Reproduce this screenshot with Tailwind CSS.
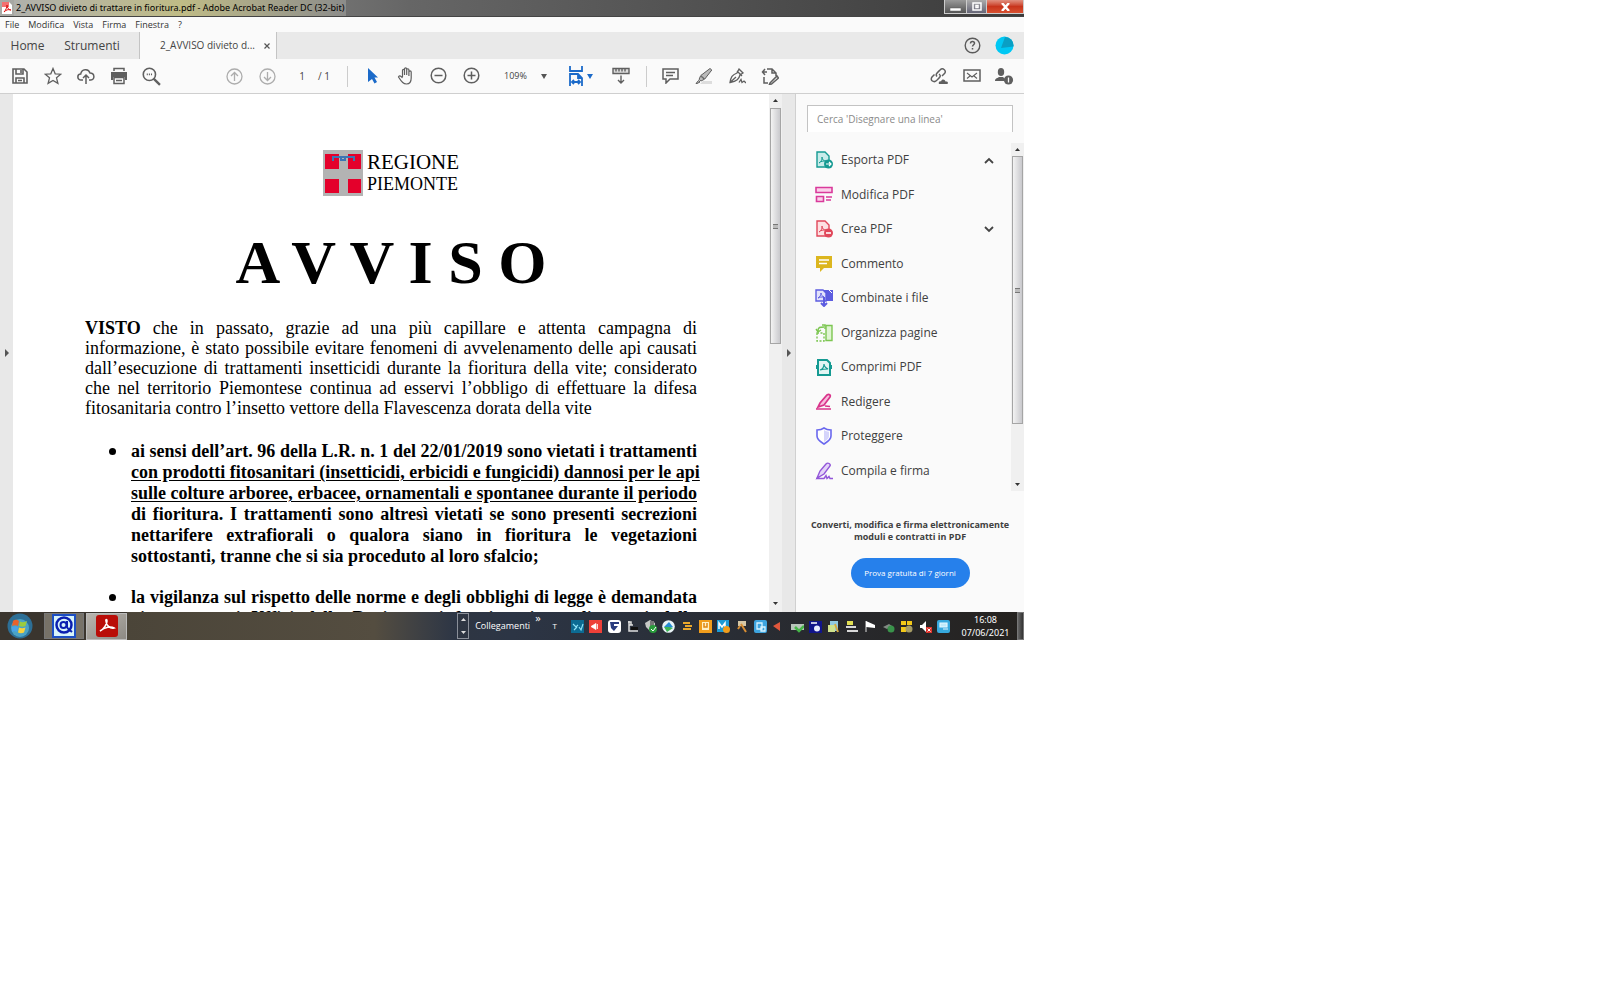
<!DOCTYPE html>
<html lang="it">
<head>
  <meta charset="UTF-8" />
  <meta name="viewport" content="width=device-width, initial-scale=1.0" />
  <title>2_AVVISO divieto di trattare in fioritura.pdf - Adobe Acrobat Reader DC (32-bit)</title>

  <!-- Tailwind -->
  <script src="https://cdn.jsdelivr.net/npm/@tailwindcss/browser@4"></script>
</head>

<body class="bg-white min-h-screen font-['Open_Sans',sans-serif]">

  <div class="w-[64vw] h-[64vh] flex flex-col bg-[#fafafa] overflow-hidden">

    <!-- Title bar -->
    <header class="h-[17px] shrink-0 flex items-center pl-[2px] border-b border-[#444] bg-linear-to-r from-[#a9a9a5] via-[#666] via-40% to-[#3c3c3c]">
      <svg class="w-[10px] h-3 shrink-0" viewBox="0 0 10 12"><path d="M0 0h7l3 3v9H0z" fill="#fff"/><path d="M0 0h7v5H0z" fill="#e33" opacity=".7"/><path d="M2 10c2-2 3-5 3-7 0 3 2 5 4 5-3-1-5 0-7 2z" fill="none" stroke="#d11" stroke-width="1"/></svg>
      <div class="ml-[2px] px-[2px] h-4 leading-4 text-[9px] text-black whitespace-nowrap bg-linear-to-r from-[#b0b0ab] via-[#c0bc86] to-[#8c8c8a] font-['Noto_Sans',sans-serif]">2_AVVISO divieto di trattare in fioritura.pdf - Adobe Acrobat Reader DC (32-bit)</div>
      <div class="ml-auto h-[14px] flex self-start border border-t-0 border-[#ccc] divide-x divide-[#ccc]">
        <button aria-label="Riduci a icona" class="w-[22px] flex items-center justify-center bg-linear-to-b from-[#999] to-[#555]"><svg class="w-[11px] h-[9px]" viewBox="0 0 11 9"><path d="M0 6h11v3H0z" fill="#fff" stroke="#555" stroke-width=".5"/></svg></button>
        <button aria-label="Ripristina" class="w-5 flex items-center justify-center bg-linear-to-b from-[#aaa] to-[#667]"><svg class="w-[10px] h-[9px]" viewBox="0 0 10 9"><path d="M1 1h8v7H1zM4 3.500h2v2H4z" fill="none" stroke="#fff" stroke-width="1.500"/></svg></button>
        <button aria-label="Chiudi" class="w-[36px] flex items-center justify-center bg-linear-to-b from-[#e09080] via-[#c8341c] to-[#d85030]"><svg class="w-[9px] h-2" viewBox="0 0 9 8"><path d="M1 0l7 8M8 0L1 8" stroke="#fff" stroke-width="2.4"/></svg></button>
      </div>
    </header>

    <!-- Menu -->
    <nav class="h-[15px] shrink-0 flex items-center gap-[9px] pl-[5px] text-[9px] leading-[14px] text-[#333]">
      <button>File</button>
      <button>Modifica</button>
      <button>Vista</button>
      <button>Firma</button>
      <button>Finestra</button>
      <button>?</button>
    </nav>

    <!-- Tabs -->
    <div class="h-[27px] shrink-0 flex items-center bg-[#e9e9e9] text-[12px] text-[#444]">
      <button class="w-[55px] h-full">Home</button>
      <button class="w-[74px] h-full">Strumenti</button>
      <div class="ml-[10px] w-[138px] h-full flex items-center justify-between pl-5 pr-[6px] bg-[#fafafa] border-x border-[#c4c4c4] text-[10px] whitespace-nowrap">
        <span>2_AVVISO divieto d...</span>
        <button aria-label="Chiudi scheda"><svg class="w-[6px] h-[6px]" viewBox="0 0 6 6"><path d="M.5.5l5 5M5.500.5l-5 5" stroke="#555" stroke-width="1.2"/></svg></button>
      </div>
      <button aria-label="Guida" class="ml-auto mr-[14px]"><svg class="w-[17px] h-[17px]" viewBox="0 0 17 17" fill="none" stroke="#5a5a5a"><circle cx="8.500" cy="8.500" r="7.300" stroke-width="1.400"/><path d="M6.500 6.500c0-3 4-2.500 4-.3 0 1.500-2 1.600-2 3.300M8.500 11v1.600" stroke-width="1.500"/></svg></button>
      <button aria-label="Profilo" class="mr-[10px]"><svg class="w-[19px] h-[19px]" viewBox="0 0 19 19"><circle cx="9.500" cy="9.500" r="9" fill="#00c8f4"/><path d="M10 1a8.500 8.500 0 0 1 8.500 9.500L6 12z" fill="#0a9fc4"/></svg></button>
    </div>

    <!-- Toolbar -->
    <div class="h-[35px] shrink-0 flex items-center border-b border-[#cfcfcf] text-[#5f5f5f]">
      <div class="flex ml-[3px] *:w-[33px] *:flex *:justify-center">
        <button aria-label="Salva"><svg class="w-[18px] h-[18px]" viewBox="0 0 18 18" fill="none" stroke="currentColor" stroke-width="1.600"><path d="M2 2h11l3 3v11H2zM5 2v5h7V2M5 16v-5h8v5M10 3v3M7 13.500h4"/></svg></button>
        <button aria-label="Preferiti"><svg class="w-[18px] h-[18px]" viewBox="0 0 18 18" fill="none" stroke="currentColor" stroke-width="1.300"><path d="M9 1.500l2.200 5.300 5.600.4-4.300 3.600 1.400 5.600L9 13.400l-4.900 3 1.400-5.600L1.200 7.200l5.600-.4z"/></svg></button>
        <button aria-label="Carica"><svg class="w-[18px] h-[18px]" viewBox="0 0 18 18" fill="none" stroke="currentColor" stroke-width="1.500"><path d="M6 13H4a3 3 0 0 1-.3-6C4.500 2 11.500 1 13 6c5 0 5 7 1 7h-2M9 17V8M6 11l3-3 3 3"/></svg></button>
        <button aria-label="Stampa"><svg class="w-[18px] h-[18px]" viewBox="0 0 18 18" fill="none" stroke="currentColor" stroke-width="1.500"><path d="M4 4V1.500h10V4"/><path d="M1 5h16v8h-2v-3H3v3H1z" fill="currentColor" stroke="none"/><path d="M4 10.500h10v6H4zM6 13.500h6"/></svg></button>
        <button aria-label="Trova"><svg class="w-[19px] h-[19px]" viewBox="0 0 18 18" fill="none" stroke="currentColor" stroke-width="1.500"><circle cx="7" cy="7" r="5.800"/><path d="M11 11l6 6" stroke-width="2.200"/><path d="M4.500 7h5" stroke-dasharray="1 1"/></svg></button>
      </div>
      <div class="flex ml-[50px] *:w-[33px] *:flex *:justify-center text-[#adadad]">
        <button aria-label="Pagina precedente"><svg class="w-[17px] h-[17px]" viewBox="0 0 17 17" fill="none" stroke="currentColor" stroke-width="1.300"><circle cx="8.500" cy="8.500" r="7.500"/><path d="M8.500 13V4.500M5 8l3.500-3.500L12 8"/></svg></button>
        <button aria-label="Pagina successiva"><svg class="w-[17px] h-[17px]" viewBox="0 0 17 17" fill="none" stroke="currentColor" stroke-width="1.300"><circle cx="8.500" cy="8.500" r="7.500"/><path d="M8.500 4v8.500M5 9l3.500 3.500L12 9"/></svg></button>
      </div>
      <div class="flex items-center gap-2 ml-[10px] w-[53px] text-[10px] text-[#444]">
        <input aria-label="Numero pagina" value="1" class="w-4 text-center" />
        <span>/ 1</span>
      </div>
      <div class="w-px h-[21px] bg-[#ccc]"></div>
      <div class="flex ml-2 *:w-[33px] *:flex *:justify-center">
        <button aria-label="Selezione"><svg class="w-[12px] h-[17px]" viewBox="0 0 12 17"><path d="M1 1l10 9.500H7.500L10 15l-2.500 1.500L5 12l-4 3z" fill="#1b6ac9"/></svg></button>
        <button aria-label="Mano"><svg class="w-[18px] h-[18px]" viewBox="0 0 18 18" fill="none" stroke="currentColor" stroke-width="1.200"><path d="M5.500 10V3.500c0-1.500 2-1.500 2 0V8 2c0-1.500 2.200-1.500 2.200 0v6-5.200c0-1.400 2.200-1.400 2.200 0V9 5c0-1.400 2.300-1.400 2.300 0v6c0 4-2 6-4.700 6-3 0-4.500-1.500-8-7 .5-1.800 2-1.500 4 1"/></svg></button>
        <button aria-label="Zoom indietro"><svg class="w-[17px] h-[17px]" viewBox="0 0 17 17" fill="none" stroke="currentColor" stroke-width="1.500"><circle cx="8.500" cy="8.500" r="7.300"/><path d="M4.500 8.500h8"/></svg></button>
        <button aria-label="Zoom avanti"><svg class="w-[17px] h-[17px]" viewBox="0 0 17 17" fill="none" stroke="currentColor" stroke-width="1.500"><circle cx="8.500" cy="8.500" r="7.300"/><path d="M4.500 8.500h8M8.500 4.500v8"/></svg></button>
      </div>
      <button aria-label="Livello zoom" class="ml-4 w-[47px] flex items-center justify-between text-[9px] text-[#444]">109%
        <svg class="w-[6px] h-[5px] mr-1" viewBox="0 0 6 5"><path d="M0 0h6L3 5z" fill="#555"/></svg>
      </button>
      <button aria-label="Adatta pagina" class="ml-[5px] w-[48px] flex items-center justify-center gap-[3px] text-[#1b6ac9]"><svg class="w-[16px] h-[20px]" viewBox="0 0 16 20" fill="none" stroke="currentColor" stroke-width="1.800"><path d="M2 0v5h12V0M2 20V8h8l4 4v8M10 8v4h4M4 16h8M6 14l-2 2 2 2M10 14l2 2-2 2"/></svg><svg class="w-[6px] h-[5px]" viewBox="0 0 6 5"><path d="M0 0h6L3 5z" fill="currentColor"/></svg></button>
      <button aria-label="Righello" class="w-[33px] flex justify-center"><svg class="w-[18px] h-[18px]" viewBox="0 0 18 18" fill="none" stroke="currentColor" stroke-width="1.400"><path d="M1 1.500h16v5H1z" fill="#ddd"/><path d="M4 2v2.500M7 2v2.500M10 2v2.500M13 2v2.500M9 8.500V16M6 13l3 3 3-3"/></svg></button>
      <div class="ml-[9px] w-px h-[21px] bg-[#ccc]"></div>
      <div class="flex ml-[7px] *:w-[33px] *:flex *:justify-center">
        <button aria-label="Commento"><svg class="w-[17px] h-[17px]" viewBox="0 0 17 17" fill="none" stroke="currentColor" stroke-width="1.500"><path d="M1 2h15v10H8l-4 4v-4H1zM4 5.500h9M4 8.500h7"/></svg></button>
        <button aria-label="Evidenzia"><svg class="w-[18px] h-[18px]" viewBox="0 0 18 18"><path d="M8 14h9v3H5z" fill="#ddd"/><path d="M15 1.500l1.800 1.500-7 9-4-3.500zM5.500 9l3.800 3.300L6 14l-2-1.500zM3.500 13.500L5 15l-3 1.500H1z" fill="#bbb" stroke="currentColor" stroke-width="1"/></svg></button>
        <button aria-label="Firma"><svg class="w-[18px] h-[18px]" viewBox="0 0 18 18" fill="none" stroke="currentColor" stroke-width="1.300"><path d="M11 2l4 4-3 2c-1 4-3 6-10 7.500C3 10 4 8 9 6zM2 15.500l6-5.500M9 4l5 5M11 15.500l2-3 1 3 2-1.500 2 2"/></svg></button>
        <button aria-label="Altri strumenti"><svg class="w-[18px] h-[18px]" viewBox="0 0 18 18" fill="none" stroke="currentColor" stroke-width="1.500"><path d="M1 5h5M4 2L1.500 5 4 8M6 2h5l4 4v3M11 2v4h4M3 10v6h4M9 16l7-7 1.500 2-7 6-2 .3z"/></svg></button>
      </div>
      <div class="flex ml-auto mr-[3px] *:w-[33px] *:flex *:justify-center">
        <button aria-label="Condividi collegamento"><svg class="w-[18px] h-[18px]" viewBox="0 0 18 18" fill="none" stroke="currentColor" stroke-width="1.500"><path d="M7 9.500c-2-2 0-3.500 3-6.500s7 1 4.500 3.500L12 9M9 7c3 2 0 4-2.500 6.500S-.5 13.500 2 10l2.500-2.500"/><path d="M9 17c-1-2 1-3 2-2.500 1-3 4-2 4.500 0C18 14 18.500 16 17.500 17z" fill="currentColor" stroke="none"/></svg></button>
        <button aria-label="Invia per e-mail"><svg class="w-[18px] h-[18px]" viewBox="0 0 18 18" fill="none" stroke="currentColor" stroke-width="1.500"><path d="M1 3h16v11H1z"/><path d="M4 6l5 4 5-4M4 11.500L7 9M14 11.500L11 9" stroke-width="1.100"/></svg></button>
        <button aria-label="Condividi con altri"><svg class="w-[19px] h-[18px]" viewBox="0 0 19 18" fill="currentColor"><ellipse cx="6" cy="5" rx="3.200" ry="4"/><path d="M0 14c0-3 3-3 4-4h4c1 1 2 1 2 4z"/><circle cx="13.500" cy="13" r="4.600"/><path d="M13.500 10.500v5" stroke="#fafafa" stroke-width="1.300"/></svg></button>
      </div>
    </div>

    <div class="flex-1 min-h-0 flex">
      <button aria-label="Apri riquadro" class="w-[13px] shrink-0 flex items-center justify-center bg-[#e8e8e8]"><svg class="w-[4px] h-2" viewBox="0 0 4 8"><path d="M0 0l4 4-4 4z" fill="#555"/></svg></button>

      <!-- Document -->
      <main class="flex-1 min-w-0 overflow-hidden bg-white px-[72px] pt-[56px] text-black font-['Liberation_Serif',serif]">
        <div class="flex justify-center items-center gap-1">
          <svg class="w-10 h-[46px]" viewBox="0 0 40 46"><path d="M0 0h40v46H0z" fill="#b3b3b3"/><path d="M2 4h14v15H2zM25 4h13v15H25zM2 29h14v14H2zM25 29h13v14H25z" fill="#e4002b"/><path d="M10 11V7h21v4M18 7v3h4V7" fill="none" stroke="#3c74b5" stroke-width="2"/></svg>
          <div>
            <p class="text-[21px] leading-[23px]">REGIONE</p>
            <p class="text-[18px] leading-[21px]">PIEMONTE</p>
          </div>
        </div>

        <h1 class="mt-[32px] text-center font-bold text-[62px] leading-[68px] whitespace-nowrap">A V V I S O</h1>

        <p class="mt-[22px] text-[18px] leading-5 whitespace-nowrap *:block *:[text-align-last:justify]">
          <span><b>VISTO</b> che in passato, grazie ad una più capillare e attenta campagna di</span>
          <span>informazione, è stato possibile evitare fenomeni di avvelenamento delle api causati</span>
          <span>dall’esecuzione di trattamenti insetticidi durante la fioritura della vite; considerato</span>
          <span>che nel territorio Piemontese continua ad esservi l’obbligo di effettuare la difesa</span>
          fitosanitaria contro l’insetto vettore della Flavescenza dorata della vite
        </p>

        <ul class="mt-[23px] pl-[46px] space-y-[20px] font-bold text-[18px] leading-[21px] whitespace-nowrap">
          <li class="relative *:block *:[text-align-last:justify]">
            <i class="absolute -left-[22px] top-[7px] w-[7px] h-[7px] rounded-full bg-black"></i>
            <span>ai sensi dell’art. 96 della L.R. n. 1 del 22/01/2019 sono vietati i trattamenti</span>
            <span class="underline underline-offset-2">con prodotti fitosanitari (insetticidi, erbicidi e fungicidi) dannosi per le api</span>
            <span class="underline underline-offset-2">sulle colture arboree, erbacee, ornamentali e spontanee durante il periodo</span>
            <span>di fioritura. I trattamenti sono altresì vietati se sono presenti secrezioni</span>
            <span>nettarifere extrafiorali o qualora siano in fioritura le vegetazioni</span>
            sottostanti, tranne che si sia proceduto al loro sfalcio;
          </li>
          <li class="relative *:block *:[text-align-last:justify]">
            <i class="absolute -left-[22px] top-[7px] w-[7px] h-[7px] rounded-full bg-black"></i>
            <span>la vigilanza sul rispetto delle norme e degli obblighi di legge è demandata</span>
            <span>ai competenti Uffici della Regione, ai funzionari e agli agenti della</span>
          </li>
        </ul>
      </main>

      <!-- Document scrollbar -->
      <div class="w-[13px] shrink-0 flex flex-col items-center bg-[#f0f0f0]">
        <svg class="w-[5px] h-[3px] mt-[5px] mb-[6px]" viewBox="0 0 5 3"><path d="M0 3h5L2.500 0z" fill="#333"/></svg>
        <div class="w-[11px] h-[236px] flex items-center justify-center border border-[#a5a5a5] bg-linear-to-r from-[#f3f3f3] to-[#c9c9cd]"><div class="w-[5px] h-[5px] border-y border-[#777] bg-[#bbb]"></div></div>
        <svg class="w-[5px] h-[3px] mt-auto mb-[7px]" viewBox="0 0 5 3"><path d="M0 0h5L2.500 3z" fill="#333"/></svg>
      </div>
      <button aria-label="Chiudi riquadro strumenti" class="w-[14px] shrink-0 flex items-center justify-center bg-[#e8e8e8] border-r border-[#d0d0d0]"><svg class="w-[4px] h-2" viewBox="0 0 4 8"><path d="M0 0l4 4-4 4z" fill="#555"/></svg></button>

      <!-- Tools panel -->
      <aside class="w-[228px] shrink-0 flex flex-col text-[#404040]">
        <input type="search" aria-label="Cerca strumenti" placeholder="Cerca 'Disegnare una linea'" class="mx-[11px] mt-[11px] h-[27px] shrink-0 pl-[9px] bg-white border border-b-0 border-[#c3c3c3] text-[10px] placeholder:text-[#8a8a8a]" />
        <div class="mt-[11px] h-[348px] shrink-0 flex">
          <ul class="flex-1 h-[345px] flex flex-col text-[12px] pl-[19px] *:flex-1 *:flex *:items-center [&_button]:flex [&_button]:items-center [&_button]:gap-2">
            <li><button><svg class="w-[18px] h-[18px]" viewBox="0 0 18 18"><path d="M2 1h8l4 4v11H2z" fill="#c8ecea" stroke="#159a92" stroke-width="1.400"/><path d="M4 12c3-2 3-4 3-6 0 3 2 4 4 4-3 0-5 0-7 2z" fill="none" stroke="#159a92"/><circle cx="13.500" cy="13" r="4.500" fill="#159a92"/><path d="M11 13h4.500M14 11l2 2-2 2" fill="none" stroke="#fff" stroke-width="1.200"/></svg>Esporta PDF</button>
              <svg class="ml-auto mr-[17px] w-[10px] h-[7px]" viewBox="0 0 10 7"><path d="M1 6l4-4 4 4" fill="none" stroke="#444" stroke-width="1.800"/></svg></li>
            <li><button><svg class="w-[18px] h-[18px]" viewBox="0 0 18 18" fill="#fbd0ea" stroke="#d93a9b" stroke-width="1.600"><path d="M1 1.500h16v5H1zM1.500 10.500h7v5h-7zM11 11h6M11 14h5"/></svg>Modifica PDF</button></li>
            <li><button><svg class="w-[18px] h-[18px]" viewBox="0 0 18 18"><path d="M2 1h8l4 4v11H2z" fill="#fde0e2" stroke="#e0475a" stroke-width="1.400"/><path d="M4 12c3-2 3-4 3-6 0 3 2 4 4 4-3 0-5 0-7 2z" fill="none" stroke="#e0475a"/><circle cx="13.500" cy="13" r="4.500" fill="#e0475a"/><path d="M11 13h5" stroke="#fff" stroke-width="1.600"/></svg>Crea PDF</button>
              <svg class="ml-auto mr-[17px] w-[10px] h-[7px]" viewBox="0 0 10 7"><path d="M1 1l4 4 4-4" fill="none" stroke="#444" stroke-width="1.800"/></svg></li>
            <li><button><svg class="w-[18px] h-[18px]" viewBox="0 0 18 18"><path d="M1 1h16v12H9l-4 4v-4H1z" fill="#dcb61f"/><path d="M4 5h10M4 8.500h8" stroke="#fff" stroke-width="1.500"/></svg>Commento</button></li>
            <li><button><svg class="w-[18px] h-[18px]" viewBox="0 0 18 18"><path d="M8 1h10v11H8z" fill="#5c5ce0"/><path d="M1 1h7l3 3v8H1z" fill="#e2e2fb" stroke="#5c5ce0" stroke-width="1.400"/><path d="M3 9c2-1 3-3 3-5 0 2 1 3 3 4-3 0-4 0-6 1z" fill="none" stroke="#5c5ce0"/><path d="M9 8v8M6 14l3 3 3-3" fill="none" stroke="#5c5ce0" stroke-width="2"/><path d="M14 1l3 3" stroke="#fff"/></svg>Combinate i file</button></li>
            <li><button><svg class="w-[18px] h-[18px]" viewBox="0 0 18 18" fill="none" stroke="#7cc651" stroke-width="1.400"><path d="M11 1.500h6v15h-6z" fill="#dff5d2"/><path d="M2 9h7v8H2z" stroke-dasharray="2 1.500"/><path d="M3 7c0-4 2-4 6-4M1 5l2 3 3-2M7 1h3v4"/></svg>Organizza pagine</button></li>
            <li><button><svg class="w-[18px] h-[18px]" viewBox="0 0 18 18"><path d="M3 2h9l3 3v12H3z" fill="#e2f5f3" stroke="#159a92" stroke-width="2"/><path d="M5 12c3-1 4-4 4-6 0 3 2 4 4 5-3 0-5 0-8 1z" fill="none" stroke="#159a92" stroke-width="1.200"/><path d="M1 7h3v4H1zM14 7h3v4h-3z" fill="#159a92"/></svg>Comprimi PDF</button></li>
            <li><button><svg class="w-[18px] h-[18px]" viewBox="0 0 18 18" fill="#f8bedd" stroke="#d9348b" stroke-width="1.700"><path d="M12 2c2-1.500 4 0 3 2L9 12l-6 2 2-4zM1 16h15M10 13l5 .5"/></svg>Redigere</button></li>
            <li><button><svg class="w-[18px] h-[18px]" viewBox="0 0 18 18"><path d="M9 1c2 1.500 4 2 7 2v6c0 4-4 6-7 8-3-2-7-4-7-8V3c3 0 5-.5 7-2z" fill="#fff" stroke="#6a68ee" stroke-width="1.600"/><path d="M9 3c2 1 3 1.500 5 1.700V9c0 3-3 4.500-5 6z" fill="#d5d4fb"/></svg>Proteggere</button></li>
            <li><button><svg class="w-[18px] h-[18px]" viewBox="0 0 18 18" fill="#e4d3f8" stroke="#9256d9" stroke-width="1.400"><path d="M11 2c2-2 5 0 4 2l-6 8-7 4 3-7zM1 16.500h8l2-3 1 3 2-2 1 2h3" /></svg>Compila e firma</button></li>
          </ul>
          <!-- List scrollbar -->
          <div class="w-[13px] flex flex-col items-center bg-[#f0f0f0]">
            <svg class="w-[5px] h-[3px] my-[5px]" viewBox="0 0 5 3"><path d="M0 3h5L2.500 0z" fill="#333"/></svg>
            <div class="w-[11px] h-[268px] flex items-center justify-center border border-[#a5a5a5] bg-linear-to-r from-[#f3f3f3] to-[#c9c9cd]"><div class="w-[5px] h-[5px] border-y border-[#777] bg-[#bbb]"></div></div>
            <svg class="w-[5px] h-[3px] mt-auto mb-[5px]" viewBox="0 0 5 3"><path d="M0 0h5L2.500 3z" fill="#333"/></svg>
          </div>
        </div>
        <p class="mt-[28px] text-center text-[9px] leading-3 font-bold whitespace-nowrap">Converti, modifica e firma elettronicamente<br />moduli e contratti in PDF</p>
        <button class="mt-[15px] mx-auto w-[119px] h-[30px] shrink-0 rounded-full bg-[#2680eb] text-white text-[8px] whitespace-nowrap">Prova gratuita di 7 giorni</button>
      </aside>
    </div>

    <!-- Taskbar -->
    <footer class="h-7 shrink-0 flex items-center text-white text-[9px] bg-linear-to-r from-[#3a352e] from-10% via-[#2c3545] via-50% to-[#25221f]">
      <button aria-label="Start" class="w-[40px] flex justify-center"><svg class="w-[26px] h-[26px]" viewBox="0 0 26 26"><circle cx="13" cy="13" r="12.500" fill="#2d6f96"/><circle cx="13" cy="15" r="9" fill="#4ba3c4"/><path d="M6 8c3-2 4-1 6 0l-1 5c-2-1-4-1-6 0z" fill="#e9632a"/><path d="M13 8.500c2 1 4 1 7-.5l-1.500 5c-2 1-4 1-6.500 0z" fill="#9ccc3c"/><path d="M5 14c2-1 4-1 6 0l-1 5c-2-1-4-1-5 0z" fill="#49a3e8"/><path d="M12 14.500c2 1 4 1 6.500 0l-1.500 5c-2 1-4 1-6 0z" fill="#fbd23a"/></svg></button>
      <button aria-label="Posta" class="ml-1 w-[40px] h-[26px] flex items-center justify-center border border-[#777] bg-[#777268]"><svg class="w-6 h-6" viewBox="0 0 24 24"><path d="M0 0h24v24H0z" fill="#1c4fc4"/><path d="M2 2h20v20H2z" fill="#d8f4fb"/><circle cx="12" cy="11" r="7.500" fill="none" stroke="#0a1fb0" stroke-width="2.500"/><circle cx="11.500" cy="11" r="3" fill="none" stroke="#0a1fb0" stroke-width="2"/><path d="M15 7v6c1 3 3 3 5 5" fill="none" stroke="#0a1fb0" stroke-width="2"/></svg></button>
      <button aria-label="Adobe Acrobat Reader" class="ml-[2px] w-[41px] h-[27px] flex items-center justify-center border border-[#bbb] bg-linear-to-br from-[#b9b5ae] to-[#8d8a85]"><svg class="w-[22px] h-[22px]" viewBox="0 0 22 22"><rect width="22" height="22" rx="3" fill="#b90d08"/><path d="M4 16c4-2 7-7 7-10 0-2-1.500-2-1 0 0 4 4 8 8 7-3-2-9-1-14 3z" fill="none" stroke="#fff" stroke-width="1.600"/></svg></button>
      <div class="flex-1 h-full bg-linear-to-r from-[#4b4539] via-[#544d40] via-75% to-[#2c3545]"></div>

      <div class="w-[12px] h-[26px] flex flex-col items-center justify-between py-1 border border-[#8a8f99]">
        <svg class="w-[5px] h-[3px]" viewBox="0 0 5 3"><path d="M0 3h5L2.500 0z" fill="#ddd"/></svg>
        <svg class="w-[5px] h-[3px]" viewBox="0 0 5 3"><path d="M0 0h5L2.500 3z" fill="#ddd"/></svg>
      </div>
      <button class="ml-[6px]">Collegamenti</button>
      <button aria-label="Altri collegamenti" class="ml-[5px] self-start text-[11px] leading-3">»</button>
      <span class="ml-[12px] mr-[14px] text-[8px]">T</span>

      <!-- Tray icons -->
      <div class="w-[379px] flex items-center justify-between *:w-[13px] *:h-[13px]">
        <svg viewBox="0 0 13 13"><path d="M0 0h13v13H0z" fill="#0c6b93"/><path d="M2 4l3 3 2-2M3 10l3-3M8 7l2 3 2-6" stroke="#8de0f5" stroke-width="1.200" fill="none"/></svg>
        <svg viewBox="0 0 13 13"><path d="M0 0h13v13H0z" fill="#ee4038"/><path d="M2 6.500l5-3v6zM8.500 4v5" fill="#fff" stroke="#fff" stroke-width=".8"/></svg>
        <svg viewBox="0 0 13 13"><rect width="13" height="13" rx="3" fill="#fff"/><path d="M2 2h9v2H6v2h4L6 11 3 8z" fill="#293b7d"/></svg>
        <svg viewBox="0 0 13 13"><path d="M3 1v10h9M3 5h4M2 2h3v3" stroke="#ddd" stroke-width="1.500" fill="none"/><path d="M5 7h7v3H5z" fill="#111"/></svg>
        <svg viewBox="0 0 13 13"><path d="M1 3l5-3 5 3v4l-5 4-4-4z" fill="#c5c8c6"/><path d="M6 1h4v5H6z" fill="#777"/><circle cx="9" cy="9" r="4" fill="#299c3b"/><path d="M7 9l2 2 3-4" stroke="#fff" fill="none"/></svg>
        <svg viewBox="0 0 13 13"><circle cx="6.500" cy="6.500" r="6.300" fill="#e9f3f7"/><path d="M2 7l5-5 4 5-3 1z" fill="#258bd1"/><path d="M2 7l3 5 6-4-4-1z" fill="#3eb556"/></svg>
        <svg viewBox="0 0 13 13"><path d="M2 3h7M4 6h7M2 9h8" stroke="#e9a72b" stroke-width="2"/></svg>
        <svg viewBox="0 0 13 13"><path d="M0 0h13v13H0z" fill="#f09d1c"/><path d="M3 2h7v8H3z" fill="#fff0c4"/><path d="M5 3v4h3V3" stroke="#e08712" stroke-width="1.500" fill="none"/></svg>
        <svg viewBox="0 0 13 13"><path d="M0 0h12v12H0z" fill="#1a9ad6"/><path d="M2 9V3l3 4 3-4v6" stroke="#fff" stroke-width="1.500" fill="none"/><circle cx="9.500" cy="9.500" r="3.500" fill="#f09d1c"/></svg>
        <svg viewBox="0 0 13 13"><path d="M2 1h8v5H2z" fill="#d6c7a4"/><path d="M5 4l5 8M4 6l-2 3" stroke="#d88d32" stroke-width="2"/></svg>
        <svg viewBox="0 0 13 13"><rect width="13" height="13" rx="2" fill="#3ea4df"/><path d="M3 3h5v6H3zM7 7h4v4H7z" fill="none" stroke="#d9f3ff" stroke-width="1.300"/></svg>
        <svg viewBox="0 0 13 13"><path d="M1 6l7-4v9z" fill="#e0573c"/></svg>
        <svg viewBox="0 0 13 13"><path d="M0 4h13v6H0z" fill="#b8c4bb"/><path d="M4 7l4 4 5-5" stroke="#46b648" stroke-width="2.500" fill="none"/></svg>
        <svg viewBox="0 0 13 13"><path d="M0 1h13v12H0z" fill="#11158a"/><path d="M2 3h6" stroke="#fff" stroke-width="1.500"/><circle cx="8" cy="8.500" r="3" fill="#e9edff"/></svg>
        <svg viewBox="0 0 13 13"><path d="M3 1h8v10H3z" fill="#91c9df"/><path d="M1 5h7v7H1z" fill="#cfe28c"/><path d="M8 4l3 8" stroke="#d6a83f" stroke-width="2"/></svg>
        <svg viewBox="0 0 13 13"><path d="M2 1h6v4H2z" fill="#e2df53"/><path d="M1 6h10v2H1zM2 10h11v2H2z" fill="#d8d8d8"/></svg>
        <svg viewBox="0 0 13 13"><path d="M2 1v11" stroke="#ddd"/><path d="M2 1l9 4v3l-9-1z" fill="#fff"/></svg>
        <svg viewBox="0 0 13 13"><path d="M1 7l6-3 3 2-5 3z" fill="#818a83"/><circle cx="9" cy="9" r="3.500" fill="#39924a"/></svg>
        <svg viewBox="0 0 13 13"><path d="M1 1h5v4H1zM7 1h5v4H7zM1 7h5v5H1z" fill="#f2c818"/><circle cx="9" cy="9" r="3.500" fill="#a69c65"/></svg>
        <svg viewBox="0 0 13 13"><path d="M1 5h2l4-4v11L3 8H1z" fill="#fff"/><path d="M7 7h6v6H7z" fill="#dc332c"/><path d="M8.500 8.500l3 3M11.500 8.500l-3 3" stroke="#fff"/></svg>
        <svg viewBox="0 0 13 13"><rect width="13" height="13" rx="2" fill="#36a9de"/><path d="M3 3h7v4H3zM6 9h5" fill="#bfeafa" stroke="#e3f7ff" stroke-width="1.200"/></svg>
      </div>
      <div class="w-[67px] pl-1 text-center leading-[13px] font-['Noto_Sans',sans-serif]">16:08<br />07/06/2021</div>
      <button aria-label="Mostra desktop" class="w-[7px] h-full border border-[#777] bg-linear-to-r from-[#666] to-[#333]"></button>
    </footer>
  </div>
</body>
</html>
